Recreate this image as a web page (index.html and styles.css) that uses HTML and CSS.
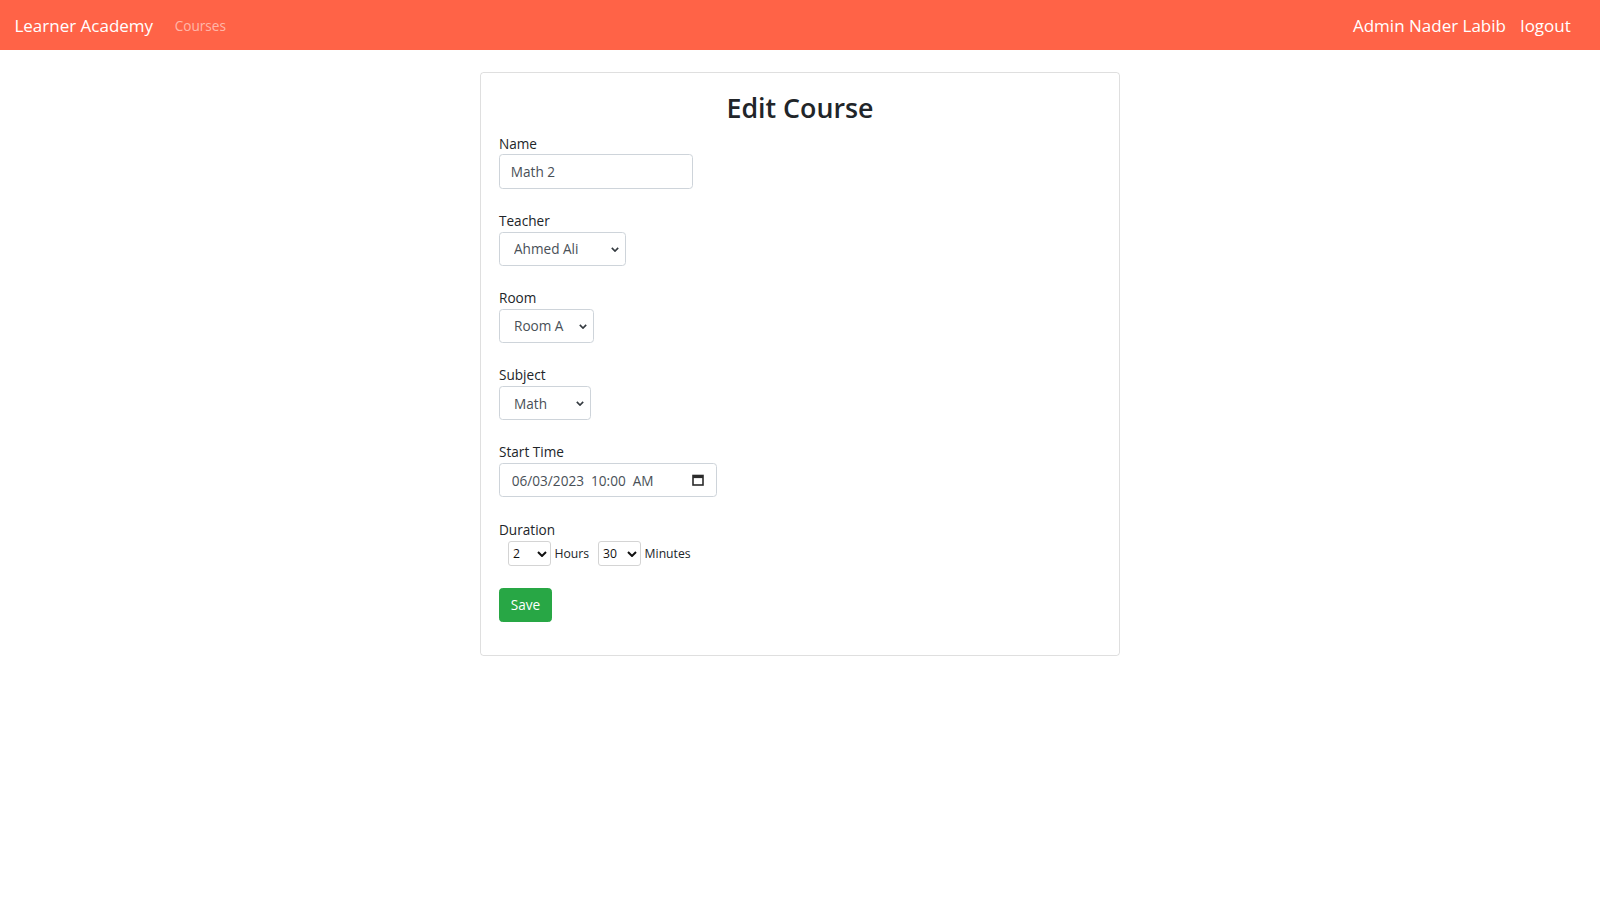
FILE: index.html
```html
<!DOCTYPE html>
<html lang="en">
<head>
<meta charset="utf-8">
<title>Edit Course</title>
<link rel="stylesheet" href="styles.css">
</head>
<body>
<nav class="navbar">
  <a class="brand" href="#">Learner Academy</a>
  <a class="nav-link muted" href="#">Courses</a>
  <div class="nav-right">
    <a class="nav-link big" href="#">Admin Nader Labib</a>
    <a class="nav-link big" href="#">logout</a>
  </div>
</nav>

<main class="card">
  <h2 class="title">Edit Course</h2>
  <form class="form">
    <div class="group">
      <label class="label">Name</label>
      <input class="control w-name" type="text" value="Math 2">
    </div>
    <div class="group">
      <label class="label">Teacher</label>
      <span class="select-wrap w-teacher">
        <select class="control select"><option>Ahmed Ali</option></select>
        <svg class="chev" viewBox="0 0 10 6" width="8" height="5"><path d="M1 1l4 4 4-4" fill="none" stroke="#343a40" stroke-width="2"/></svg>
      </span>
    </div>
    <div class="group">
      <label class="label">Room</label>
      <span class="select-wrap w-room">
        <select class="control select"><option>Room A</option></select>
        <svg class="chev" viewBox="0 0 10 6" width="8" height="5"><path d="M1 1l4 4 4-4" fill="none" stroke="#343a40" stroke-width="2"/></svg>
      </span>
    </div>
    <div class="group">
      <label class="label">Subject</label>
      <span class="select-wrap w-subject">
        <select class="control select"><option>Math</option></select>
        <svg class="chev" viewBox="0 0 10 6" width="8" height="5"><path d="M1 1l4 4 4-4" fill="none" stroke="#343a40" stroke-width="2"/></svg>
      </span>
    </div>
    <div class="group">
      <label class="label">Start Time</label>
      <span class="select-wrap w-date">
        <input class="control date" type="text" value="06/03/2023  10:00  AM">
        <svg class="cal" viewBox="0 0 12 12" width="12" height="12"><rect x="1" y="1.5" width="10" height="9.5" fill="none" stroke="#2b2b2b" stroke-width="1.6"/><rect x="1" y="1.5" width="10" height="2.6" fill="#2b2b2b"/></svg>
      </span>
    </div>
    <div class="group">
      <label class="label">Duration</label>
      <div class="duration">
        <span class="select-wrap small">
          <select class="mini"><option>2</option></select>
          <svg class="chev-mini" viewBox="0 0 10 6" width="10" height="6"><path d="M1 1l4 4 4-4" fill="none" stroke="#111" stroke-width="2"/></svg>
        </span>
        <span class="unit">Hours</span>
        <span class="select-wrap small">
          <select class="mini"><option>30</option></select>
          <svg class="chev-mini" viewBox="0 0 10 6" width="10" height="6"><path d="M1 1l4 4 4-4" fill="none" stroke="#111" stroke-width="2"/></svg>
        </span>
        <span class="unit">Minutes</span>
      </div>
    </div>
    <button class="btn-save" type="button">Save</button>
  </form>
</main>
</body>
</html>
```

FILE: styles.css
```css
* { box-sizing: border-box; }

body {
  margin: 0;
  font-family: "Segoe UI", "Open Sans", "Noto Sans", Arial, sans-serif;
  font-size: 13.6px;
  line-height: 21.6px;
  color: #212529;
  background: #fff;
}

a { text-decoration: none; }

.navbar {
  display: flex;
  align-items: center;
  height: 50px;
  padding: 1px 22px 0 14.4px;
  background: #ff6347;
}

.brand {
  color: #fff;
  font-size: 17px;
  margin-right: 14.4px;
}

.nav-link {
  padding: 0 7.2px;
}

.nav-link.muted {
  color: rgba(255, 255, 255, 0.55);
  font-size: 13.6px;
  padding-top: 1px;
}

.nav-right {
  margin-left: auto;
  display: flex;
  align-items: center;
}

.nav-link.big {
  color: #fff;
  font-size: 17px;
}

.card {
  width: 640px;
  margin: 22px auto 0;
  border: 1px solid rgba(0, 0, 0, 0.125);
  border-radius: 3.6px;
  padding: 18px;
}

.title {
  margin: 0 0 7.2px;
  text-align: center;
  font-size: 26.8px;
  font-weight: 600;
  line-height: 34.56px;
}

.form { margin: 0 0 14.4px; }

.group {
  margin-bottom: 21.2px;
}

.label {
  display: block;
  line-height: 21.6px;
}

.control {
  display: block;
  height: 34.4px;
  padding: 0 10.8px;
  font-family: inherit;
  font-size: 13.6px;
  color: #495057;
  background: #fff;
  border: 1px solid #ced4da;
  border-radius: 3.6px;
  outline: none;
}

.w-name { width: 194px; }

.select-wrap {
  position: relative;
  display: block;
}

.select-wrap .control { width: 100%; }

.w-teacher { width: 127px; }
.w-room { width: 95px; }
.w-subject { width: 92px; }
.w-date { width: 218px; }

.select {
  appearance: none;
  -webkit-appearance: none;
  padding-left: 14px;
}

.chev {
  position: absolute;
  right: 7px;
  top: 15px;
  pointer-events: none;
}

.cal {
  position: absolute;
  right: 13px;
  top: 11px;
  pointer-events: none;
}

.date { padding-left: 11.8px; white-space: pre; }

.duration {
  display: flex;
  align-items: center;
  height: 26.4px;
  padding-left: 9px;
  font-size: 12.2px;
}

.select-wrap.small {
  display: inline-block;
  width: 42.5px;
}

.mini {
  appearance: none;
  -webkit-appearance: none;
  display: block;
  width: 100%;
  height: 25px;
  padding: 0 0 0 4px;
  font-family: inherit;
  font-size: 12.2px;
  color: #111;
  background: #fff;
  border: 1px solid #d4d4d4;
  border-radius: 3px;
  outline: none;
}

.chev-mini {
  position: absolute;
  right: 4px;
  top: 10px;
  pointer-events: none;
}

.unit {
  margin: 0 9px 0 4px;
  color: #212529;
}

.unit:last-child { margin-right: 0; }

.btn-save {
  display: block;
  height: 34.4px;
  padding: 0 10.8px;
  font-family: inherit;
  font-size: 13.6px;
  color: #fff;
  background: #28a745;
  border: 1px solid #28a745;
  border-radius: 3.6px;
}
```
